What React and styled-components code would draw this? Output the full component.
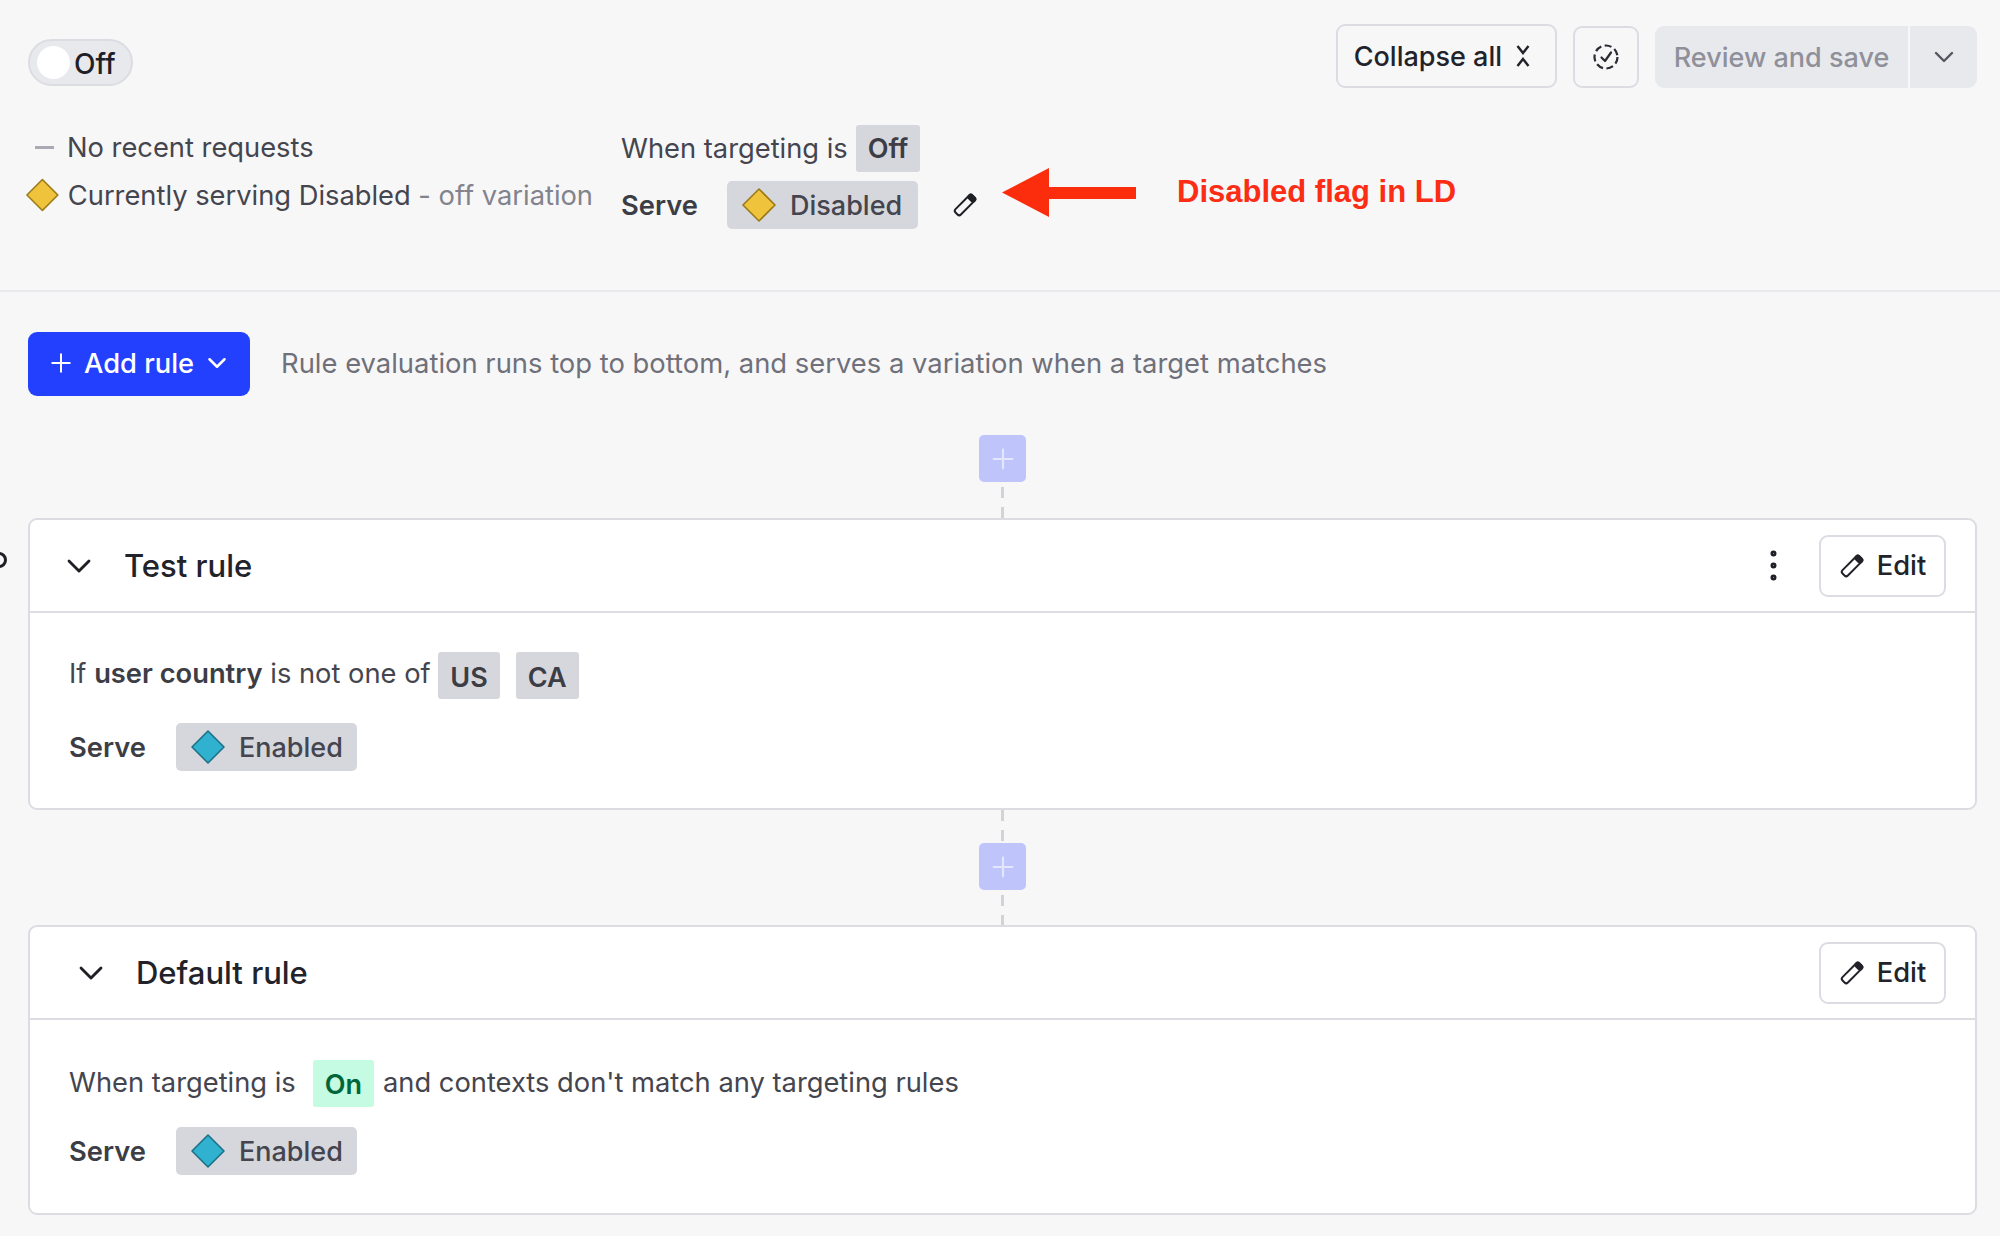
import React from 'react';
import styled, { createGlobalStyle } from 'styled-components';
import { Plus, ChevronDown, EllipsisVertical } from 'lucide-react';

const Global = createGlobalStyle`
  html, body { margin: 0; padding: 0; background: #f7f7f8; }
  body { font-family: Inter, "Liberation Sans", sans-serif; color: #3c3d45; }
  * { box-sizing: border-box; }
`;

const Page = styled.div`
  position: relative;
  width: 2000px;
  height: 1236px;
  overflow: hidden;
  background: #f7f7f8;
`;

const Header = styled.header`
  position: relative;
  height: 292px;
  padding: 24px 23px 0 28px;
  border-bottom: 2px solid #e9e9ee;
`;

const TopRow = styled.div`
  display: flex;
  justify-content: space-between;
  align-items: flex-start;
`;

const Toggle = styled.div`
  margin-top: 15px;
  width: 105px;
  height: 47px;
  padding: 2px 0 0 7px;
  display: flex;
  align-items: center;
  gap: 4px;
  border-radius: 24px;
  border: 2px solid #dcdde2;
  background: #e8e9ed;
  font-size: 28px;
  font-weight: 500;
  color: #1f2026;
`;

const Knob = styled.span`
  width: 33px;
  height: 33px;
  margin-top: -2px;
  border-radius: 50%;
  background: #fff;
`;

const Actions = styled.div`
  display: flex;
  align-items: flex-end;
  gap: 16px;
`;

const OutlineButton = styled.div`
  height: 64px;
  padding: 0 24px 0 16px;
  display: flex;
  align-items: center;
  gap: 13px;
  border: 2px solid #dcdde2;
  border-radius: 9px;
  font-size: 27px;
  font-weight: 500;
  color: #22232a;
`;

const IconButton = styled(OutlineButton)`
  width: 66px;
  height: 62px;
  padding: 0;
  justify-content: center;
`;

const SplitButton = styled.div`
  display: flex;
  gap: 2px;
  height: 62px;
`;

const SaveButton = styled.div`
  width: 253px;
  display: flex;
  align-items: center;
  justify-content: center;
  background: #e8e9ed;
  border-radius: 9px 0 0 9px;
  font-size: 27px;
  font-weight: 500;
  color: #8f909a;
`;

const SaveCaret = styled.div`
  width: 67px;
  display: flex;
  align-items: center;
  justify-content: center;
  background: #e8e9ed;
  border-radius: 0 9px 9px 0;
  color: #55565f;
`;

const SummaryRow = styled.div`
  display: flex;
  gap: 28px;
  margin-top: 37px;
`;

const StatusColumn = styled.div`
  width: 565px;
  display: flex;
  flex-direction: column;
  gap: 16px;
  padding-top: 6px;
`;

const StatusLine = styled.div`
  display: flex;
  align-items: center;
  gap: ${(p) => p.$gap || 9}px;
  height: 32px;
  margin-left: ${(p) => p.$shift || 0}px;
  font-size: 27.3px;
  color: #44454e;
  white-space: nowrap;
`;

const Dash = styled.span`
  width: 19px;
  height: 3px;
  margin-left: 7px;
  margin-right: 4px;
  background: #a9aab3;
`;

const Muted = styled.span`
  color: #82838d;
`;

const TargetColumn = styled.div`
  display: flex;
  flex-direction: column;
  gap: 9px;
`;

const TargetLine = styled.div`
  display: flex;
  align-items: center;
  gap: ${(p) => p.$gap || 8}px;
  font-size: 27.3px;
  color: #44454e;
  white-space: nowrap;
`;

const ServeLabel = styled.span`
  font-weight: 600;
  color: #3c3d45;
  width: ${(p) => p.$width}px;
`;

const Chip = styled.span`
  display: inline-flex;
  align-items: center;
  height: 47px;
  margin-top: ${(p) => p.$drop || 0}px;
  padding: ${(p) => p.$lower || 0}px 12px 0;
  border-radius: 3px;
  background: ${(p) => (p.$on ? '#c4fbe2' : '#d6d7dc')};
  color: ${(p) => (p.$on ? '#00663a' : '#3c3d45')};
  font-size: 27px;
  font-weight: 600;
`;

const VariationChip = styled.span`
  display: inline-flex;
  align-items: center;
  gap: 13px;
  height: 48px;
  padding: 0 ${(p) => p.$right || 14}px 0 14px;
  border-radius: 5px;
  background: #d6d7dc;
  color: #44454e;
  font-size: 27px;
  font-weight: 500;
`;

const EditGlyph = styled.span`
  display: flex;
  margin-left: 26px;
  color: #1f2026;
`;

const Annotation = styled.div`
  position: absolute;
  left: 1002px;
  top: 168px;
  display: flex;
  align-items: center;
  gap: 41px;
`;

const AnnotationText = styled.span`
  padding-bottom: 1px;
  font-family: "Liberation Sans", Arial, sans-serif;
  font-size: 31px;
  font-weight: 700;
  color: #fb2d14;
  white-space: nowrap;
`;

const Body = styled.main`
  padding: 40px 23px 0 28px;
`;

const AddRow = styled.div`
  display: flex;
  align-items: center;
  gap: 31px;
`;

const AddButton = styled.div`
  width: 222px;
  height: 64px;
  padding: 0 0 2px 18px;
  display: flex;
  align-items: center;
  gap: 8px;
  border-radius: 9px;
  background: #2440ff;
  color: #fff;
  font-size: 27.3px;
  font-weight: 500;
`;

const Hint = styled.span`
  padding-bottom: 2px;
  font-size: 27.4px;
  color: #6f707a;
`;

const Connector = styled.div`
  display: flex;
  flex-direction: column;
  align-items: center;
  height: ${(p) => p.$height}px;
  padding-top: ${(p) => p.$top || 0}px;
`;

const Dashes = styled.span`
  flex: ${(p) => (p.$fixed ? '0 0 auto' : 1)};
  height: ${(p) => (p.$fixed ? `${p.$fixed}px` : 'auto')};
  margin-top: ${(p) => (p.$fixed ? 0 : 5)}px;
  width: 3px;
  background: repeating-linear-gradient(to bottom, #d2d3d8 0 11px, transparent 11px 20px);
`;

const AddBox = styled.div`
  flex: none;
  width: 47px;
  height: 47px;
  display: flex;
  align-items: center;
  justify-content: center;
  border-radius: 5px;
  background: #bfc5fb;
  color: #e4e6fd;
`;

const Card = styled.section`
  position: relative;
  height: ${(p) => p.$height}px;
  background: #fff;
  border: 2px solid #dcdde2;
  border-radius: 9px;
`;

const Handle = styled.span`
  position: absolute;
  left: -30px;
  top: 30px;
  display: flex;
`;

const CardHead = styled.div`
  height: 93px;
  display: flex;
  align-items: center;
  padding: 0 29px 0 ${(p) => p.$indent}px;
  border-bottom: 2px solid #dcdde2;
`;

const CardTitle = styled.h3`
  margin: 0 0 0 25px;
  flex: 1;
  font-size: 31px;
  font-weight: 500;
  color: #22232a;
`;

const Kebab = styled(EllipsisVertical)`
  margin: 0 -5px 0 -4px;
  color: #1f2026;
`;

const EditButton = styled(OutlineButton)`
  width: 127px;
  height: 62px;
  padding: 0;
  justify-content: center;
  gap: 12px;
  margin-left: 30px;
  font-size: 27.3px;
`;

const CardBody = styled.div`
  display: flex;
  flex-direction: column;
  gap: ${(p) => p.$gap}px;
  padding: ${(p) => p.$top}px 38px 0 39px;
`;

const Sentence = styled.div`
  display: flex;
  align-items: center;
  font-size: 27.3px;
  color: #44454e;
  white-space: pre;
`;

const Strong = styled.b`
  font-weight: 600;
  color: #3c3d45;
`;

const ChipGap = styled.span`
  width: ${(p) => p.$width}px;
`;

const Diamond = ({ color, stroke }) => (
  <svg width="36" height="36" viewBox="0 0 36 36" fill="none">
    <path d="M18 2 L34 18 L18 34 L2 18 Z" fill={color} stroke={stroke} strokeWidth="1.6" strokeLinejoin="round" />
  </svg>
);

const PencilGlyph = () => (
  <svg width="26" height="26" viewBox="0 0 26 26" fill="none" stroke="currentColor" strokeWidth="2">
    <g transform="rotate(45 13 13)">
      <rect x="9.2" y="1" width="7.6" height="24" rx="2.4" />
      <rect x="9.2" y="1" width="7.6" height="4.5" rx="2" fill="currentColor" />
    </g>
  </svg>
);

const CollapseGlyph = () => (
  <svg width="16" height="24" viewBox="0 0 16 24" fill="none" stroke="#22232a" strokeWidth="2.4">
    <path d="M2.5 2 L8 9 L13.5 2 M2.5 22 L8 15 L13.5 22" />
  </svg>
);

const DashedCheck = () => (
  <svg width="28" height="28" viewBox="0 0 28 28" fill="none" stroke="#2a2b32" strokeWidth="2.2">
    <circle cx="14" cy="14" r="11.5" strokeDasharray="7 3.5" />
    <path d="M9.5 14.5 L13 18 L19 9.5" strokeLinecap="round" strokeLinejoin="round" />
  </svg>
);

const ENABLED = { color: '#2fb1cf', stroke: '#1d7187' };
const DISABLED = { color: '#f0c33c', stroke: '#9a7a16' };

export default function App() {
  return (
    <Page>
      <Global />
      <Header>
        <TopRow>
          <Toggle>
            <Knob />
            Off
          </Toggle>
          <Actions>
            <OutlineButton>
              Collapse all
              <CollapseGlyph />
            </OutlineButton>
            <IconButton>
              <DashedCheck />
            </IconButton>
            <SplitButton>
              <SaveButton>Review and save</SaveButton>
              <SaveCaret>
                <ChevronDown size={32} strokeWidth={1.8} />
              </SaveCaret>
            </SplitButton>
          </Actions>
        </TopRow>
        <SummaryRow>
          <StatusColumn>
            <StatusLine>
              <Dash />
              No recent requests
            </StatusLine>
            <StatusLine $gap={8} $shift={-3}>
              <Diamond {...DISABLED} />
              <span>
                Currently serving Disabled <Muted>- off variation</Muted>
              </span>
            </StatusLine>
          </StatusColumn>
          <TargetColumn>
            <TargetLine>
              When targeting is
              <Chip>Off</Chip>
            </TargetLine>
            <TargetLine $gap={0}>
              <ServeLabel $width={98}>Serve</ServeLabel>
              <VariationChip $right={16}>
                <Diamond {...DISABLED} />
                Disabled
              </VariationChip>
              <EditGlyph>
                <PencilGlyph />
              </EditGlyph>
            </TargetLine>
          </TargetColumn>
        </SummaryRow>
        <Annotation>
          <svg width="134" height="49" viewBox="0 0 134 49">
            <path d="M0 24.5 L47 0 V19 H134 V31 H47 V49 Z" fill="#fb2d0c" />
          </svg>
          <AnnotationText>Disabled flag in LD</AnnotationText>
        </Annotation>
      </Header>

      <Body>
        <AddRow>
          <AddButton>
            <Plus size={30} strokeWidth={1.6} />
            Add rule
            <ChevronDown size={30} strokeWidth={2} />
          </AddButton>
          <Hint>Rule evaluation runs top to bottom, and serves a variation when a target matches</Hint>
        </AddRow>

        <Connector $height={122} $top={39}>
          <AddBox>
            <Plus size={32} strokeWidth={1.6} />
          </AddBox>
          <Dashes />
        </Connector>

        <Card $height={292}>
          <Handle>
            <svg width="10" height="20" viewBox="0 0 10 20" fill="none" stroke="#1f2026" strokeWidth="3">
              <circle cx="-1" cy="10" r="6.5" />
            </svg>
          </Handle>
          <CardHead $indent={29}>
            <ChevronDown size={40} strokeWidth={1.7} color="#1f2026" />
            <CardTitle>Test rule</CardTitle>
            <Kebab size={41} strokeWidth={1.5} />
            <EditButton>
              <PencilGlyph />
              Edit
            </EditButton>
          </CardHead>
          <CardBody $gap={24} $top={34}>
            <Sentence>
              If <Strong>user country</Strong> is not one of{' '}
              <Chip $drop={5} $lower={3}>US</Chip>
              <ChipGap $width={16} />
              <Chip $drop={5} $lower={3}>CA</Chip>
            </Sentence>
            <Sentence>
              <ServeLabel $width={107}>Serve</ServeLabel>
              <VariationChip>
                <Diamond {...ENABLED} />
                Enabled
              </VariationChip>
            </Sentence>
          </CardBody>
        </Card>

        <Connector $height={115}>
          <Dashes $fixed={33} />
          <AddBox>
            <Plus size={32} strokeWidth={1.6} />
          </AddBox>
          <Dashes />
        </Connector>

        <Card $height={290}>
          <CardHead $indent={41}>
            <ChevronDown size={40} strokeWidth={1.7} color="#1f2026" />
            <CardTitle>Default rule</CardTitle>
            <EditButton>
              <PencilGlyph />
              Edit
            </EditButton>
          </CardHead>
          <CardBody $gap={20} $top={38}>
            <Sentence>
              When targeting is
              <ChipGap $width={17} />
              <Chip $on $drop={2} $lower={2}>On</Chip>
              <ChipGap $width={9} />
              and contexts don't match any targeting rules
            </Sentence>
            <Sentence>
              <ServeLabel $width={107}>Serve</ServeLabel>
              <VariationChip>
                <Diamond {...ENABLED} />
                Enabled
              </VariationChip>
            </Sentence>
          </CardBody>
        </Card>
      </Body>
    </Page>
  );
}
